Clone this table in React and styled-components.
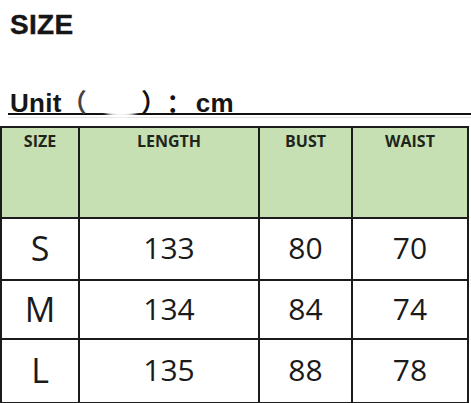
import styled, { createGlobalStyle } from 'styled-components';

const GlobalStyle = createGlobalStyle`
    html, body {
        margin: 0;
        padding: 0;
        background: #ffffff;
    }
`;

const sizes = [
    { size: 'S', length: 133, bust: 80, waist: 70 },
    { size: 'M', length: 134, bust: 84, waist: 74 },
    { size: 'L', length: 135, bust: 88, waist: 78 },
];

const Page = styled.div`
    width: 471px;
    height: 403px;
    overflow: hidden;
    background: #fff;
    color: #161616;
`;

const Title = styled.h1`
    margin: 11px 0 0 10px;
    font-family: 'Liberation Sans', Arial, sans-serif;
    font-weight: 700;
    font-size: 28px;
    line-height: 28px;
    letter-spacing: 0.3px;
    -webkit-text-stroke: 0.4px #161616;
`;

const UnitLine = styled.div`
    position: relative;
    margin: 50px 0 0 8px;
    padding-left: 2px;
    height: 24px;
    border-bottom: 2px solid #111;
    font-family: 'Liberation Sans', 'Noto Sans CJK SC', sans-serif;
    font-weight: 700;
    font-size: 26px;
    line-height: 24px;
    white-space: pre;
    display: flex;
    align-items: baseline;
    letter-spacing: 0.3px;
`;

const Paren = styled.span`
    font-family: 'Noto Sans CJK SC', sans-serif;
    font-weight: 700;
    font-size: 25px;
    margin-right: ${(p) => p.mr || 0}px;
    color: ${(p) => (p.faded ? '#444' : '#111')};
`;

const Gap = styled.span`
    display: inline-block;
    width: ${(p) => p.w}px;
`;

const Smudge = styled.span`
    position: absolute;
    left: 92px;
    top: 3px;
    width: 42px;
    height: 25px;
    border-radius: 50%;
    background: #fff;
    filter: blur(1.5px);
`;

const Rule = styled.div`
    margin: 2px 0 0 8px;
    height: 1px;
    background: #e4e4e4;
`;

const Grid = styled.div`
    margin-top: 8px;
    width: 465px;
    display: grid;
    grid-template-columns: 76px 178px 91px 114px;
    grid-template-rows: 89px 60px 57px 62px;
    gap: 2px;
    padding: 2px;
    background: #1b1b1b;
`;

const HeadCell = styled.div`
    background: #c6e0b4;
    display: flex;
    justify-content: center;
    align-items: flex-start;
    padding-top: 3px;
    font-family: 'Open Sans', 'Noto Sans', sans-serif;
    font-weight: 700;
    font-size: 16px;
    line-height: 20px;
    color: #1e261b;
`;

const Cell = styled.div`
    background: #fff;
    display: flex;
    justify-content: center;
    align-items: center;
    font-family: 'Open Sans', 'Noto Sans', sans-serif;
    font-weight: 400;
    font-size: ${(p) => (p.big ? 34 : 30)}px;
    line-height: 1;
    color: #1a1a1a;
    padding-bottom: 2px;
`;

export default function App() {
    return (
        <Page>
            <GlobalStyle />
            <Title>SIZE</Title>
            <UnitLine>
                Unit
                <Paren faded>（</Paren>
                <Gap w={54} />
                <Paren>）</Paren>
                <Paren mr={4}>：</Paren>
                cm
                <Smudge />
            </UnitLine>
            <Rule />
            <Grid>
                <HeadCell>SIZE</HeadCell>
                <HeadCell>LENGTH</HeadCell>
                <HeadCell>BUST</HeadCell>
                <HeadCell>WAIST</HeadCell>
                {sizes.map((row) => [
                    <Cell key={row.size + 's'} big>
                        {row.size}
                    </Cell>,
                    <Cell key={row.size + 'l'}>{row.length}</Cell>,
                    <Cell key={row.size + 'b'}>{row.bust}</Cell>,
                    <Cell key={row.size + 'w'}>{row.waist}</Cell>,
                ])}
            </Grid>
        </Page>
    );
}
